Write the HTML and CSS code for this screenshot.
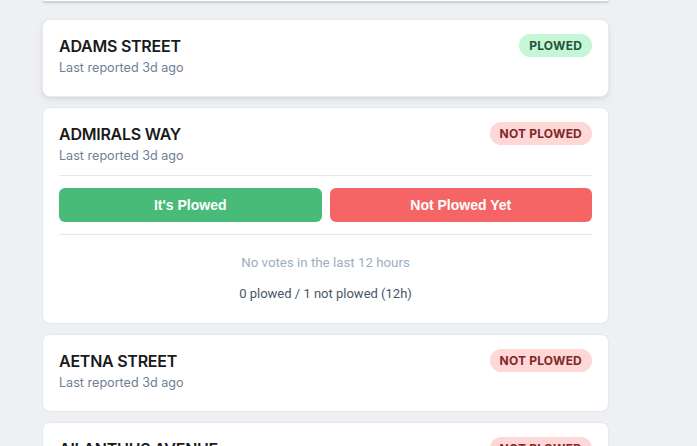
FILE: index.html
```html
<!DOCTYPE html>
<html lang="en">
<head>
<meta charset="utf-8">
<title>Streets</title>
<link rel="stylesheet" href="styles.css">
</head>
<body>
<main class="list">
  <div class="card card-top"></div>

  <section class="card card-raised">
    <div class="card-head">
      <div class="info">
        <h2 class="street">ADAMS STREET</h2>
        <p class="meta">Last reported 3d ago</p>
      </div>
      <span class="badge badge-plowed">PLOWED</span>
    </div>
  </section>

  <section class="card">
    <div class="card-head">
      <div class="info">
        <h2 class="street">ADMIRALS WAY</h2>
        <p class="meta">Last reported 3d ago</p>
      </div>
      <span class="badge badge-not">NOT PLOWED</span>
    </div>
    <div class="actions">
      <button class="btn btn-green">It's Plowed</button>
      <button class="btn btn-red">Not Plowed Yet</button>
    </div>
    <div class="votes">
      <p class="votes-empty">No votes in the last 12 hours</p>
      <p class="votes-count">0 plowed / 1 not plowed (12h)</p>
    </div>
  </section>

  <section class="card">
    <div class="card-head">
      <div class="info">
        <h2 class="street">AETNA STREET</h2>
        <p class="meta">Last reported 3d ago</p>
      </div>
      <span class="badge badge-not">NOT PLOWED</span>
    </div>
  </section>

  <section class="card">
    <div class="card-head">
      <div class="info">
        <h2 class="street">AILANTHUS AVENUE</h2>
        <p class="meta">Last reported 3d ago</p>
      </div>
      <span class="badge badge-not">NOT PLOWED</span>
    </div>
  </section>
</main>
</body>
</html>
```

FILE: styles.css
```css
* { box-sizing: border-box; }

html, body {
  margin: 0;
  padding: 0;
  background: #eef0f4;
  font-family: Inter, "Noto Sans", "Liberation Sans", sans-serif;
  overflow: hidden;
}

.list {
  width: 567px;
  margin-left: 42px;
  display: flex;
  flex-direction: column;
  gap: 10px;
}

.card {
  background: #ffffff;
  border: 1px solid #e2e8f0;
  border-radius: 8px;
  padding: 16px 16px 19px;
}

.card-top {
  height: 3px;
  padding: 0;
  border: none;
  border-bottom: 2px solid #cbd5e0;
  border-radius: 0 0 8px 8px;
  margin-bottom: 6px;
  box-shadow: 0 1px 3px rgba(0,0,0,0.06);
}

.card-raised {
  border-color: #e8ecf1;
  box-shadow: 0 1px 3px rgba(0,0,0,0.08), 0 4px 8px rgba(0,0,0,0.05);
}

.card-head {
  display: flex;
  justify-content: space-between;
  align-items: flex-start;
}

.street {
  margin: 0;
  font-size: 16px;
  line-height: 20px;
  font-weight: 600;
  color: #1a1a1a;
  letter-spacing: -0.25px;
  white-space: nowrap;
}

.meta {
  margin: 3px 0 0;
  font-size: 12.6px;
  line-height: 18px;
  color: #718096;
}

.badge {
  margin-top: -2px;
  display: inline-block;
  padding: 0 10px;
  height: 23px;
  line-height: 23px;
  border-radius: 12px;
  font-size: 12px;
  font-weight: 700;
  letter-spacing: 0.2px;
  white-space: nowrap;
}

.badge-plowed { background: #c6f6d5; color: #22543d; }
.badge-not { background: #fed7d7; color: #822727; }

.actions {
  margin-top: 10px;
  padding: 12px 0;
  border-top: 1px solid #e2e8f0;
  border-bottom: 1px solid #e2e8f0;
  display: grid;
  grid-template-columns: 1fr 1fr;
  gap: 8px;
}

.btn {
  height: 34px;
  border: none;
  border-radius: 6px;
  color: #ffffff;
  font-family: "Liberation Sans", Arial, sans-serif;
  font-size: 14px;
  font-weight: 700;
  cursor: pointer;
}

.btn-green { background: #48bb78; }
.btn-red { background: #f56565; }

.votes {
  padding-top: 18px;
  text-align: center;
  font-family: Roboto, "Liberation Sans", sans-serif;
}

.votes-empty {
  margin: 0;
  font-size: 13.3px;
  line-height: 20px;
  color: #a0aec0;
}

.votes-count {
  margin: 11px 0 0;
  font-size: 13px;
  line-height: 20px;
  color: #4a5568;
}
```
